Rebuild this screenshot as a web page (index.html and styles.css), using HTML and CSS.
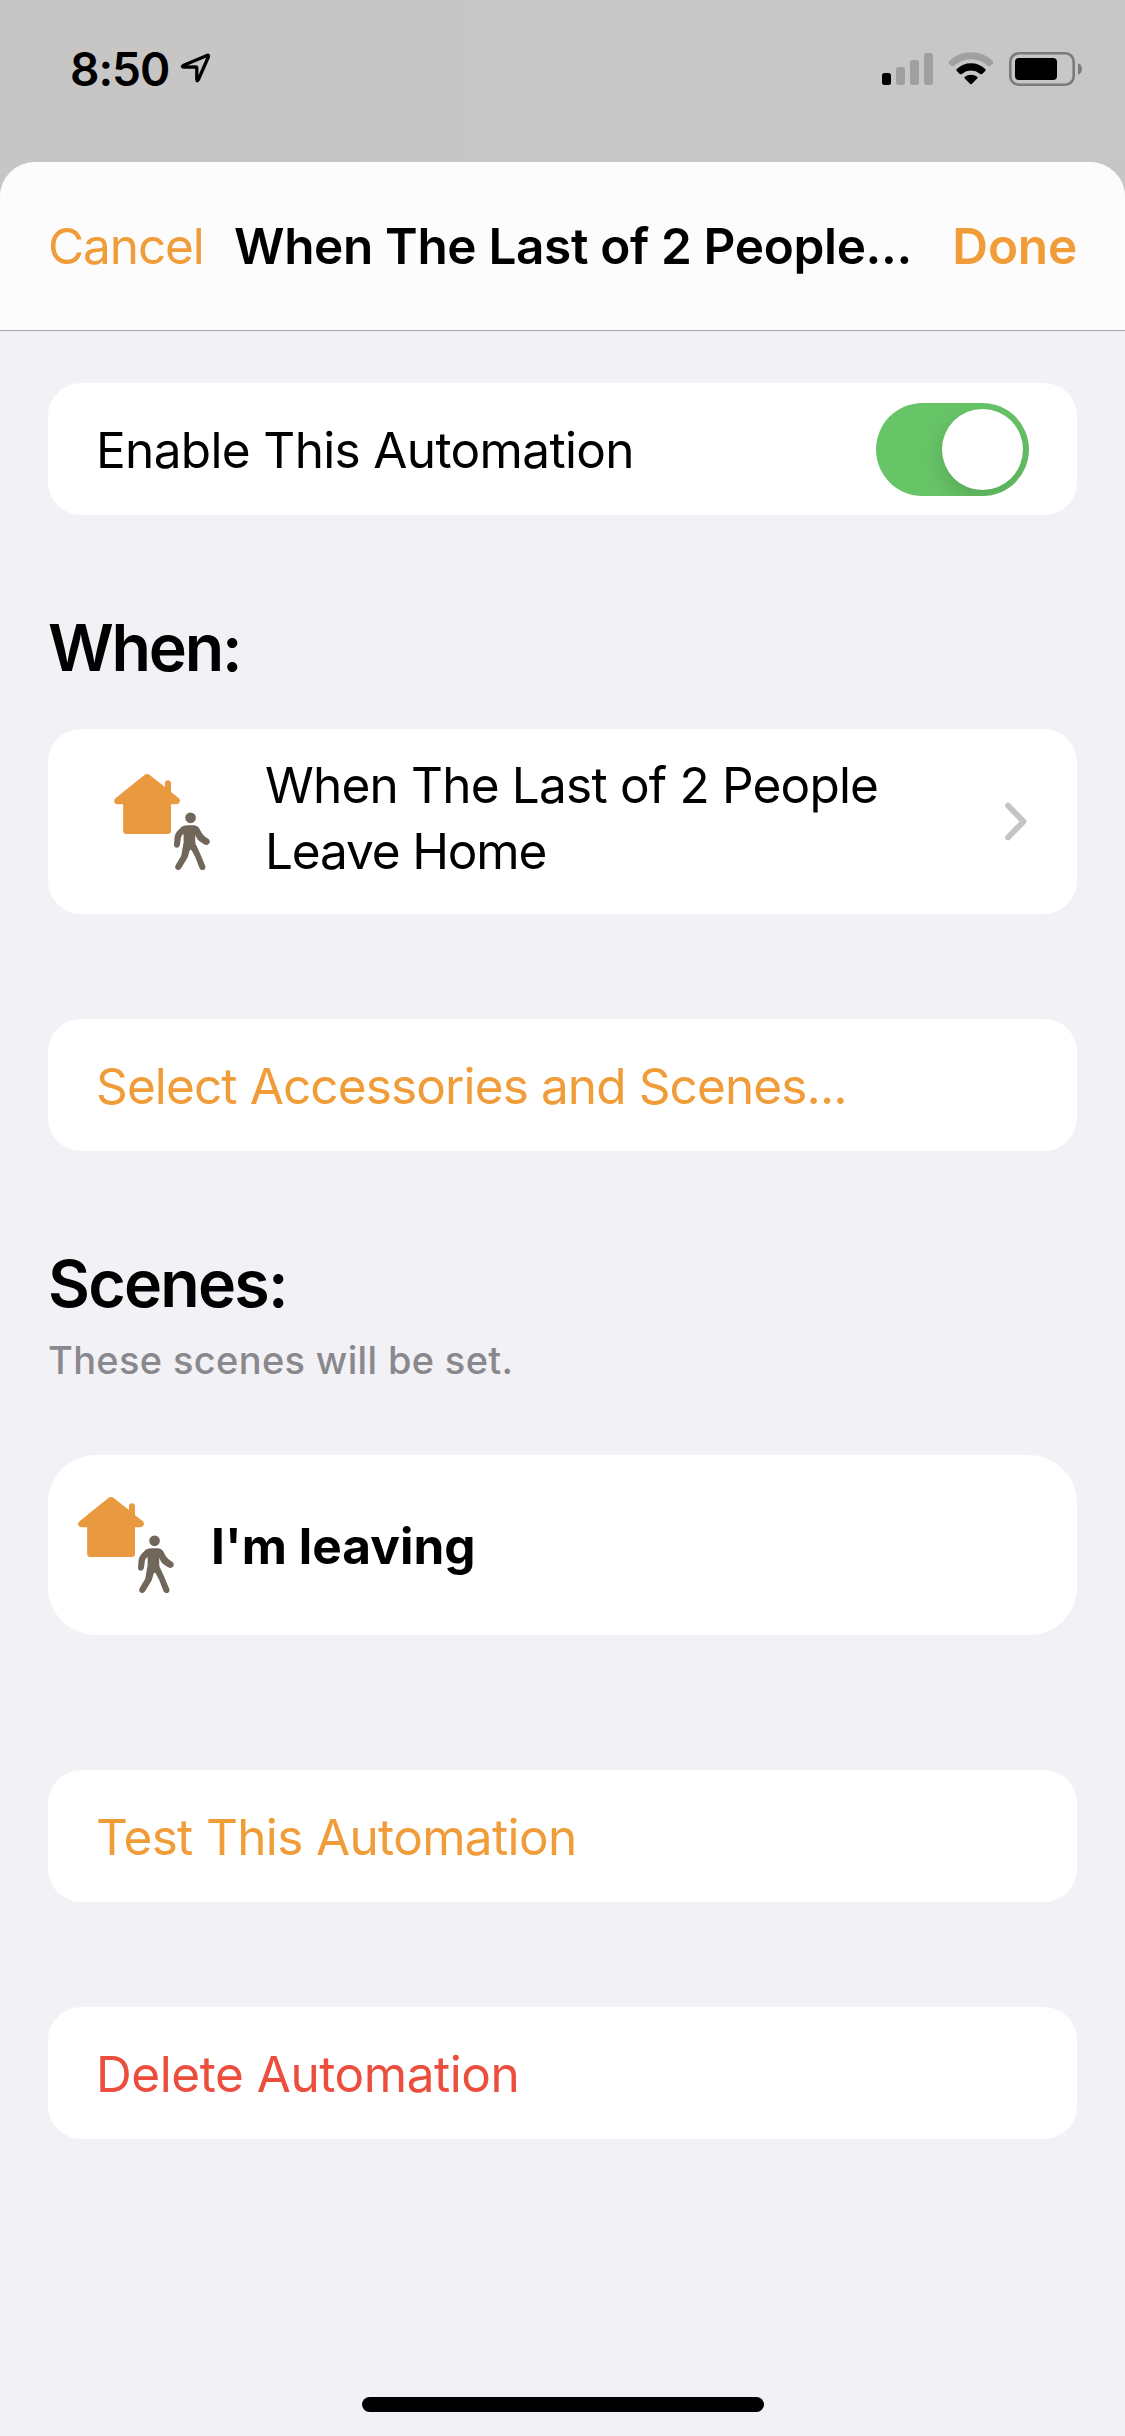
FILE: index.html
```html
<!DOCTYPE html>
<html lang="en">
<head>
  <meta charset="utf-8">
  <title>Automation</title>
  <link rel="stylesheet" href="styles.css">
</head>
<body>
  <svg class="symbols" aria-hidden="true">
    <symbol id="leave-home" viewBox="0 0 288 289">
      <path fill="#e9993f" d="M91 3Q99-3 107 3L153 39V28Q153 19 162 19T171 28V54L194 72Q200 78 197 85Q194 91 187 91H171V171Q171 181 161 181H37Q27 181 27 171V91H11Q3 91 0 84Q-1 77 5 72Z"/>
      <g fill="#70665a">
        <circle cx="230" cy="132" r="16"/>
        <path d="M219 154H241Q250 154 255 162L264 178Q268 184 283 195Q291 201 286 209Q281 216 272 212L259 204Q251 199 246 188L244 182V203Q244 209 248 216L260 242L274 276Q277 284 271 288Q262 292 257 284L244 250L234 231Q230 225 227 231L222 249L218 257L202 283Q197 291 189 288Q181 284 185 275L202 246L205 228L209 206V181Q202 184 201 192L198 214Q196 222 189 222Q180 221 180 213L182 190Q184 178 190 172L203 159Q210 154 219 154Z"/>
      </g>
    </symbol>
  </svg>

  <header class="status">
    <div class="status-left">
      <span class="time">8:50</span>
      <svg class="location" width="32" height="32" viewBox="0 0 32 32"><path d="M3.2 13.600 27 3.400Q29.200 2.800 28.300 5L18.400 27.600Q17.200 30 16.800 27.400V16Q16.800 15 15.800 15L4 15.200Q1.200 14.800 3.200 13.600Z" fill="none" stroke="#000" stroke-width="3.300" stroke-linejoin="round"/></svg>
    </div>
    <div class="status-right">
      <svg width="51" height="32" viewBox="0 0 51 32">
        <rect y="20" width="9" height="12" rx="2.5"/>
        <g fill="#a0a0a0"><rect x="14" y="14" width="9" height="18" rx="2.5"/><rect x="28" y="7" width="9" height="25" rx="2.5"/><rect x="42" width="9" height="32" rx="2.5"/></g>
      </svg>
      <svg class="wifi" width="46" height="34" viewBox="0 0 46 34">
        <path fill="#a0a0a0" d="M1 9.2Q10 .3 23 .3T45 9.2Q46 10.4 45 11.4L42.300 14Q41.200 14.900 40.100 14Q32.500 7.200 23 7.200T5.900 14Q4.800 14.900 3.700 14L1 11.400Q0 10.400 1 9.200Z"/>
        <path d="M8.800 17Q14.800 11.300 23 11.300T37.200 17Q38.200 18 37.200 19L34.200 21.900Q33.200 22.700 32.200 21.900Q28 18.600 23 18.600T13.800 21.900Q12.800 22.700 11.800 21.900L8.800 19Q7.800 18 8.800 17Z"/>
        <path d="M16.800 24.800Q19.400 22.800 23 22.800T29.200 24.800Q30 25.600 29.200 26.500L24 31.700Q23 32.700 22 31.700L16.800 26.500Q16 25.600 16.800 24.800Z"/>
      </svg>
      <svg width="74" height="34" viewBox="0 0 74 34">
        <rect x="1.300" y="1.300" width="63.400" height="31.400" rx="8.500" fill="none" stroke="#7b7b7b" stroke-width="2.600"/>
        <rect x="6" y="6" width="42" height="22" rx="4"/>
        <path fill="#7b7b7b" d="M69 11.200Q73 13 73 17T69 22.800Z"/>
      </svg>
    </div>
  </header>

  <section class="sheet">
    <nav class="nav">
      <span class="cancel">Cancel</span>
      <span class="title">When The Last of 2 People...</span>
      <span class="done">Done</span>
    </nav>

    <main class="content">
      <div class="card enable">
        <span class="enable-label">Enable This Automation</span>
        <span class="toggle"><span class="knob"></span></span>
      </div>

      <h2 class="heading heading-when">When:</h2>
      <div class="card trigger">
        <svg class="scene-icon" width="96" height="96"><use href="#leave-home"/></svg>
        <p class="trigger-text">When The Last of 2 People<br><span class="trigger-end">Leave Home</span></p>
        <svg class="chevron" width="22" height="38" viewBox="0 0 22 38"><path d="M3 3.500 18.500 19.500 3 35.500" fill="none" stroke="#c4c4c6" stroke-width="5.800" stroke-linecap="round" stroke-linejoin="round"/></svg>
      </div>

      <div class="card action select">Select Accessories and Scenes...</div>

      <h2 class="heading heading-scenes">Scenes:</h2>
      <p class="note">These scenes will be set.</p>
      <div class="card scene">
        <svg class="scene-icon" width="96" height="96"><use href="#leave-home"/></svg>
        <span class="scene-name">I'm leaving</span>
      </div>

      <div class="card action test">Test This Automation</div>
      <div class="card action delete">Delete Automation</div>
    </main>

    <div class="home-indicator"></div>
  </section>
</body>
</html>
```
FILE: styles.css
```css
* { box-sizing: border-box; }

body {
  margin: 0;
  width: 1125px;
  height: 2436px;
  display: flex;
  flex-direction: column;
  overflow: hidden;
  background: #c6c6c6;
  color: #000;
  font: 400 49.5px/66px Inter, "Liberation Sans", sans-serif;
}

svg { display: block; flex: none; overflow: visible; }
h2, p { margin: 0; }

.symbols { display: none; }

/* Status bar */
.status {
  height: 162px;
  flex: none;
  display: flex;
  justify-content: space-between;
  padding: 52px 42px 0 70px;
  background: linear-gradient(90deg, #c6c6c6, #c7c6c5 12%, #c6c6c6 30%, #c7c7c9 65%, #c7c7c7);
}
.status-left, .status-right { display: flex; align-items: flex-start; }
.time {
  font-size: 46px;
  font-weight: 600;
  line-height: 34px;
  letter-spacing: -1px;
}
.location { margin-left: 11px; }
.status-right > svg:first-child { margin-top: 1px; }
.wifi { margin: 0 15px 0 15px; }

/* Modal sheet */
.sheet {
  flex: 1;
  display: flex;
  flex-direction: column;
  border-radius: 35px 35px 0 0;
  overflow: hidden;
  background: #f2f1f6;
}
.nav {
  height: 169px;
  flex: none;
  display: flex;
  align-items: center;
  padding: 0 48px 0 48px;
  border-bottom: 1px solid #a8a8ac;
  background: #fcfcfd;
  white-space: nowrap;
}
.cancel { color: #f09c38; width: 186px; letter-spacing: -1.1px; }
.title { flex: 1; font-weight: 600; letter-spacing: -0.35px; }
.done { color: #f09c38; font-weight: 600; letter-spacing: -0.2px; }

.content {
  flex: 1;
  display: flex;
  flex-direction: column;
  padding: 52px 48px 0;
}
.card {
  flex: none;
  display: flex;
  background: #fff;
  border-radius: 33px;
  white-space: nowrap;
}

.enable {
  height: 132px;
  align-items: center;
  justify-content: space-between;
  padding: 0 48px;
}
.enable-label { padding-top: 2px; letter-spacing: -0.65px; }
.toggle {
  width: 153px;
  height: 93px;
  display: flex;
  justify-content: flex-end;
  padding: 6px;
  border-radius: 47px;
  overflow: hidden;
  background: #67c567;
}
.knob {
  width: 81px;
  height: 81px;
  border-radius: 50%;
  background: #fff;
  box-shadow: 0 9px 24px rgba(0, 0, 0, 0.15);
}

.heading {
  font-size: 64.5px;
  font-weight: 600;
  line-height: 79px;
}
.heading-when { margin: 94px 0 41px; letter-spacing: -2.25px; }
.heading-scenes { margin: 94px 0 0; letter-spacing: -1.8px; }

.trigger { height: 185px; padding: 23px 50px 0 66px; }
.trigger .scene-icon { margin-top: 22px; }
.trigger-text { flex: 1; margin-left: 55px; letter-spacing: -0.8px; }
.trigger-end { letter-spacing: -1.15px; }
.chevron { margin-top: 50px; }

.action {
  height: 132px;
  align-items: center;
  padding: 2px 48px 0;
  color: #f09c38;
}
.select { margin-top: 105px; letter-spacing: -0.88px; }

.note {
  margin: 13px 0 0;
  color: #89888d;
  font-size: 38px;
  font-weight: 500;
  line-height: 46px;
  letter-spacing: 0.34px;
}
.scene {
  height: 180px;
  margin-top: 72px;
  padding: 42px 30px 0;
  border-radius: 48px;
}
.scene-name {
  margin: 16px 0 0 37px;
  font-weight: 700;
  letter-spacing: 0.05px;
}
.test { margin-top: 135px; letter-spacing: -0.65px; }
.delete { margin-top: 105px; color: #eb4e3d; letter-spacing: -0.45px; }

.home-indicator {
  width: 402px;
  height: 15px;
  flex: none;
  margin: 0 auto 24px;
  border-radius: 8px;
  background: #000;
}
```
